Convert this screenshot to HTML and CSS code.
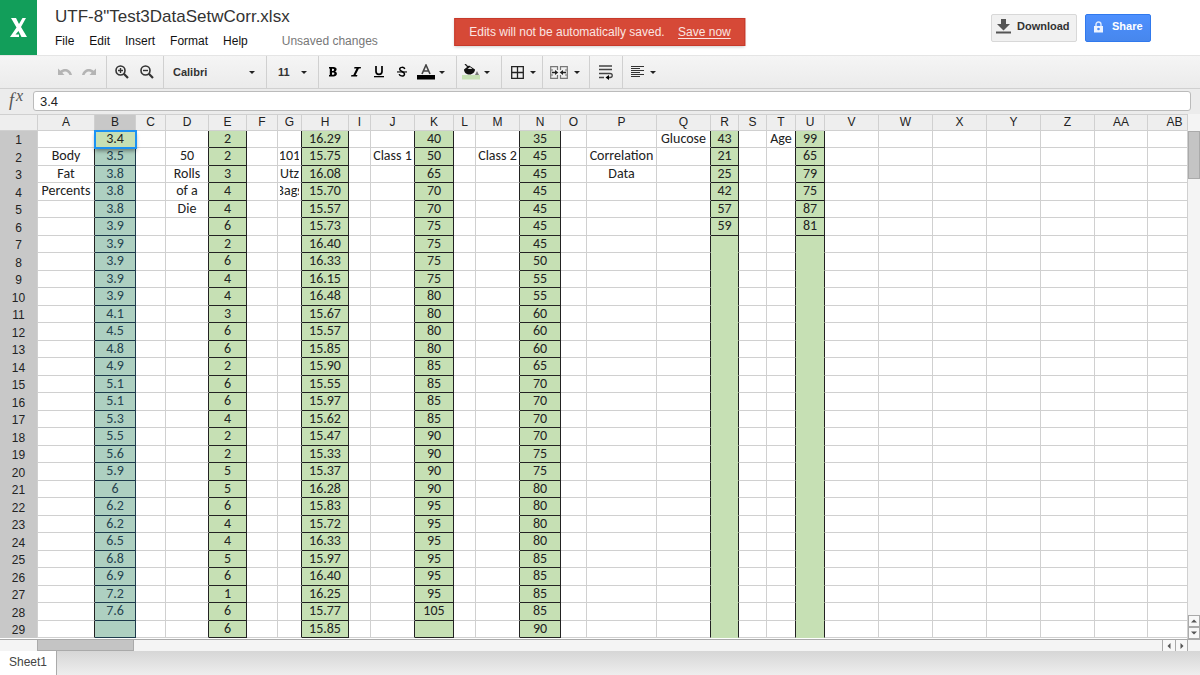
FILE: index.html
```html
<!DOCTYPE html>
<html lang="en">
<head>
<meta charset="utf-8">
<title>UTF-8"Test3DataSetwCorr.xlsx</title>
<link rel="stylesheet" href="styles.css">
</head>
<body>
<header class="header">
  <div class="logo" aria-hidden="true">
    <svg width="18" height="20" viewBox="0 0 18 20"><path d="M1 0H6L9 6L12.500 0H16L11 9L17 19H11.500L8.500 13L5.500 16.500H9V19H0L6.500 9.500Z" fill="#fff"/></svg>
  </div>
  <div class="document">
    <h1 class="title">UTF-8"Test3DataSetwCorr.xlsx</h1>
    <nav class="menu">
      <button class="menu-item">File</button>
      <button class="menu-item">Edit</button>
      <button class="menu-item">Insert</button>
      <button class="menu-item">Format</button>
      <button class="menu-item">Help</button>
      <span class="status">Unsaved changes</span>
    </nav>
  </div>
  <div class="banner" role="status">Edits will not be automatically saved. <a class="banner-link" href="#save">Save now</a></div>
  <div class="actions">
    <button class="action download">
      <svg width="15" height="15" viewBox="0 0 15 15" fill="#555"><path d="M5 0H10V5H14L7.500 11.500L1 5H5Z"/><path d="M0 12.500H15V14.500H0Z"/></svg>
      <span class="action-label">Download</span>
    </button>
    <button class="action share">
      <svg width="9" height="12" viewBox="0 0 9 12"><path d="M2 6V3.500A2.500 2.500 0 0 1 7 3.500V6" fill="none" stroke="#dce9ff" stroke-width="1.400"/><path d="M0 5H9V11.500H0Z" fill="#eef4ff"/><circle cx="4.500" cy="8" r="1.300" fill="#4a8bf5"/></svg>
      <span class="action-label">Share</span>
    </button>
  </div>
</header>

<div class="toolbar" role="toolbar" aria-label="Formatting">
  <div class="group history">
    <button class="tool" aria-label="Undo"><svg width="14" height="8" viewBox="0 0 14 8"><path d="M0 .5V7H6.500L4.300 4.800C7 2.500 10 3.500 11.500 7H14C12.500 1 6.500-.5 2.300 2.800Z" fill="#b4b4b4"/></svg></button>
    <button class="tool" aria-label="Redo"><svg width="14" height="8" viewBox="0 0 14 8"><path d="M14 .5V7H7.500L9.700 4.800C7 2.500 4 3.500 2.500 7H0C1.500 1 7.500-.5 11.700 2.800Z" fill="#b4b4b4"/></svg></button>
  </div>
  <div class="group zoom">
    <button class="tool" aria-label="Zoom in"><svg width="14" height="14" viewBox="0 0 14 14" fill="none" stroke="#333"><circle cx="5.500" cy="5.500" r="4.500" stroke-width="1.600"/><path d="M3 5.500H8M5.500 3V8" stroke-width="1.400"/><path d="M8.800 8.800L13 13" stroke-width="2.200"/></svg></button>
    <button class="tool" aria-label="Zoom out"><svg width="14" height="14" viewBox="0 0 14 14" fill="none" stroke="#333"><circle cx="5.500" cy="5.500" r="4.500" stroke-width="1.600"/><path d="M3 5.500H8" stroke-width="1.400"/><path d="M8.800 8.800L13 13" stroke-width="2.200"/></svg></button>
  </div>
  <div class="group family">
    <select class="picker" aria-label="Font"><option>Calibri</option></select>
    <span class="caret"></span>
  </div>
  <div class="group size">
    <select class="picker" aria-label="Font size"><option>11</option></select>
    <span class="caret"></span>
  </div>
  <div class="group style">
    <button class="tool" aria-label="Bold"><svg width="10" height="10" viewBox="0 0 10 10"><path fill-rule="evenodd" d="M1 0H5.500C9.500 0 9.300 4 7 4.500C10 5.200 9.500 9.500 5.500 9.500H1V8H1.800V1.500H1ZM4 1.800V4H5C6.500 4 6.500 1.800 5 1.800ZM4 5.500V7.800H5.200C6.800 7.800 6.800 5.500 5.200 5.500Z"/></svg></button>
    <button class="tool" aria-label="Italic"><svg width="10" height="10" viewBox="0 0 10 10"><path d="M3.500 0H10L9.600 1.400H7.900L4.600 8.100H6.400L6 9.500H0L.4 8.100H2.300L5.500 1.400H3.100Z"/></svg></button>
    <button class="tool" aria-label="Underline"><svg width="10" height="12" viewBox="0 0 10 12"><path d="M2 0V5.500C2 9.300 8 9.300 8 5.500V0" fill="none" stroke="#000" stroke-width="1.700"/><path d="M0 10H10V11.300H0Z"/></svg></button>
    <button class="tool" aria-label="Strikethrough"><svg width="10" height="12" viewBox="0 0 10 12"><path d="M7.800 3C7 .8 2.700.8 2.700 3.200C2.700 5.500 7.500 5.500 7.500 8C7.500 10.800 2.700 10.500 2.200 8.200" fill="none" stroke="#000" stroke-width="1.500"/><path d="M0 5.400H10V6.500H0Z"/></svg></button>
    <button class="tool dropdown" aria-label="Text colour"><svg width="18" height="16" viewBox="0 0 18 16"><path d="M5 10L9 1L13 10M6.300 7H11.700" fill="none" stroke="#444" stroke-width="1.600"/><path d="M0 11H18V15.500H0Z"/></svg><span class="caret"></span></button>
  </div>
  <div class="group fill">
    <button class="tool dropdown" aria-label="Fill colour"><svg width="18" height="16" viewBox="0 0 18 16"><path d="M0 11H18V15.500H0Z" fill="#c6e0b4"/><path d="M3 0L8 5" stroke="#222" stroke-width="1.300"/><path d="M2 5.500L7 1.500L13 5.500C13 8 10.500 10.500 7.500 10.500C4.500 10.500 2 8.500 2 5.500Z" fill="#111"/><path d="M5.500 5L8 3L10.500 5Z" fill="#ddd"/><path d="M15 7L17 11H13Z" fill="#777"/></svg><span class="caret"></span></button>
  </div>
  <div class="group borders">
    <button class="tool dropdown" aria-label="Borders"><svg width="13" height="13" viewBox="0 0 13 13"><path d="M.7.7H12.300V12.300H.7ZM6.500.7V12.300M.7 6.500H12.300" fill="none" stroke="#222" stroke-width="1.300"/></svg><span class="caret"></span></button>
  </div>
  <div class="group merge">
    <button class="tool dropdown" aria-label="Merge cells"><svg width="18" height="13" viewBox="0 0 18 13"><path d="M7.500 4V.7H.7V12.300H7.500V9M10.500 4V.7H17.300V12.300H10.500V9M.7 4H3M.7 9H3M15 4H17.300M15 9H17.300" fill="none" stroke="#777" stroke-width="1.200"/><path d="M2 5.800H5V4L8.300 6.500L5 9V7.200H2ZM16 5.800H13V4L9.700 6.500L13 9V7.200H16Z" fill="#222"/></svg><span class="caret"></span></button>
  </div>
  <div class="group wrap">
    <button class="tool" aria-label="Wrap text"><svg width="14" height="15" viewBox="0 0 14 15"><path d="M0 1H13M0 4.500H13M0 8.500H11C14 8.500 14 12.500 11 12.500H9M0 12.500H5" fill="none" stroke="#444" stroke-width="1.300"/><path d="M10 10V15L6.500 12.500Z"/></svg></button>
  </div>
  <div class="group align">
    <button class="tool dropdown" aria-label="Align"><svg width="13" height="12" viewBox="0 0 13 12"><path d="M0 .5H13M0 2.500H9M0 4.500H13M0 6.500H9M0 8.500H13M0 10.500H9" fill="none" stroke="#333"/></svg><span class="caret"></span></button>
  </div>
</div>

<div class="formula">
  <label class="formula-label" for="formula">f<sup class="formula-sup">x</sup></label>
  <input class="formula-input" id="formula" type="text" value="3.4">
</div>

<main class="workspace">
  <div class="sheet">
    <table class="cells">
      <colgroup id="columns"></colgroup>
      <thead><tr id="letters"></tr></thead>
      <tbody id="rows"></tbody>
    </table>
  </div>
  <div class="vertical-scroll">
    <div class="vertical-thumb"></div>
    <button class="step up" aria-label="Scroll up"><svg width="6" height="4" viewBox="0 0 6 4"><path d="M0 3.500L3 .5L6 3.500Z" fill="#555"/></svg></button>
    <button class="step" aria-label="Scroll down"><svg width="6" height="4" viewBox="0 0 6 4"><path d="M0 .5L3 3.500L6 .5Z" fill="#555"/></svg></button>
  </div>
</main>
<div class="horizontal-scroll">
  <div class="horizontal-thumb"></div>
  <button class="side-step left" aria-label="Scroll left"><svg width="4" height="6" viewBox="0 0 4 6"><path d="M3.500 0L.5 3L3.500 6Z" fill="#555"/></svg></button>
  <button class="side-step" aria-label="Scroll right"><svg width="4" height="6" viewBox="0 0 4 6"><path d="M.5 0L3.500 3L.5 6Z" fill="#555"/></svg></button>
</div>
<footer class="tabs"><button class="tab">Sheet1</button></footer>
<script src="sheet.js"></script>
</body>
</html>
```
FILE: styles.css
```css
* { box-sizing: border-box; }

body {
  display: flex;
  flex-direction: column;
  height: 100vh;
  margin: 0;
  overflow: hidden;
  background: #fff;
  color: #222;
  font: 12px/16px "Liberation Sans", Arial, sans-serif;
}

button, select, input { margin: 0; font: inherit; color: inherit; }
button { padding: 0; border: 0; background: none; }
svg { display: block; flex: none; }

/* Header */
.header { position: relative; display: flex; flex: none; height: 55px; }
.logo { display: flex; align-items: center; justify-content: center; width: 37px; background: #129e5a; }
.document { padding: 6px 0 0 18px; }
.title { margin: 0 0 6px; font-size: 17px; font-weight: 400; line-height: 21px; color: #333; white-space: nowrap; }
.menu { display: flex; gap: 15px; }
.menu-item { color: #111; }
.status { padding-left: 19px; color: #777; }

.banner {
  position: absolute;
  top: 18px;
  left: 50%;
  height: 28px;
  padding: 0 14px;
  border: 1px solid #c6392a;
  background: #d64937;
  box-shadow: 0 1px 3px #0003;
  color: #fbe5e2;
  line-height: 26px;
  white-space: nowrap;
  transform: translateX(-50%);
}
.banner-link { margin-left: 10px; color: inherit; text-underline-offset: 2px; }

.actions { display: flex; gap: 8px; margin: 14px 49px 0 auto; }
.action {
  display: flex;
  height: 28px;
  border: 1px solid #d8d8d8;
  border-radius: 2px;
  font-size: 11px;
  font-weight: 700;
}
.download { gap: 6px; width: 86px; padding: 4px 0 0 4px; background: #f1f1f1; color: #333; }
.share { gap: 9px; width: 66px; padding: 6px 0 0 8px; border-color: #3079ed; background: linear-gradient(#4d90fe, #4787ed); color: #fff; }
.download .action-label { line-height: 14px; }
.share .action-label { line-height: 10px; }

/* Toolbar */
.toolbar {
  display: flex;
  flex: none;
  height: 34px;
  border-top: 1px solid #e5e5e5;
  border-bottom: 1px solid #d0d0d0;
  background: linear-gradient(#f5f5f5, #ebebeb);
}
.group { display: flex; align-items: center; border-right: 1px solid #d0d0d0; }
.tool { display: flex; align-items: center; }
.caret { flex: none; border: 3px solid transparent; border-top-color: #222; border-bottom: 0; }
.history { gap: 10px; width: 107px; padding-left: 58px; }
.zoom { gap: 11px; width: 57px; padding-left: 8px; }
.family { width: 103px; padding: 0 11px 0 9px; }
.size { width: 52px; padding: 0 11px 0 11px; }
.picker { flex: 1; min-width: 0; padding: 0; border: 0; background: none; appearance: none; font-size: 11px; font-weight: 700; color: #333; }
.style { gap: 13px; width: 138px; padding-left: 9px; }
.fill { width: 45px; padding-left: 5px; }
.borders { width: 41px; padding-left: 9px; }
.merge { width: 47px; padding-left: 7px; }
.wrap { width: 33px; padding-left: 9px; }
.align { padding-left: 8px; border: 0; }
.dropdown { gap: 6px; }
.style .dropdown { margin-left: -3px; gap: 4px; }
.fill .dropdown { gap: 4px; }

/* Formula bar */
.formula { display: flex; flex: none; height: 25px; padding: 2px 9px 3px 9px; background: #ececec; }
.formula-label { width: 24px; font: italic 18px/18px "Liberation Serif", serif; color: #555; white-space: nowrap; }
.formula-sup { margin-left: 2px; font-size: 16px; line-height: 0; vertical-align: 5px; }
.formula-input { flex: 1; min-width: 0; height: 20px; padding: 0 6px; border: 1px solid #bbb; border-radius: 3px; background: #fff; font-size: 13px; }

/* Sheet */
.workspace { display: flex; flex: 1; min-height: 0; }
.sheet { flex: 1; min-width: 0; overflow: hidden; border-right: 1px solid #d0d0d0; }
.cells { width: 1202px; border-spacing: 0; table-layout: fixed; }
.cells tr { height: 18px; }
.cells tbody tr:nth-child(odd), .cells thead tr { height: 17px; }
.corner, .letter, .number, .cell { height: inherit; padding: 0; overflow: hidden; border: 0 solid #d0d0d0; font-weight: 400; text-align: center; white-space: nowrap; }
.corner, .letter { border-width: 1px 1px 1px 0; background: #eee; line-height: 15px; }
.number { padding-top: 2px; border-right-width: 1px; background: #c8c8c8; line-height: 15px; }
.letter.active { background: #c8c8c8; }
.cell { border-width: 0 1px 1px 0; font: 14px/15px Carlito, Lato, sans-serif; vertical-align: top; }
.value { display: flex; justify-content: center; height: 15px; margin: 0 2px; overflow: hidden; }
.cell.before-filled { border-right-color: #222; }
.cell.filled { border-color: #222; background: #c6e0b4; }
.cell.open { border-bottom-color: #c6e0b4; }
.cell.selected { background: #aed0c1; color: #24424f; }
.cell.selected.filled { border-color: #1e3b4c; }
.cell.current { position: relative; z-index: 1; outline: 2px solid #1c92f2; outline-offset: -1px; box-shadow: 0 3px 4px #0006; }

/* Scroll bars */
.vertical-scroll { display: flex; flex-direction: column; width: 12px; padding-top: 17px; background: #f4f4f4; }
.vertical-thumb { height: 48px; border: 1px solid #aaa; background: #c4c4c4; }
.step { display: flex; align-items: center; justify-content: center; height: 12px; border: 1px solid #aaa; background: #f8f8f8; }
.up { margin-top: auto; }
.horizontal-scroll { display: flex; flex: none; height: 12px; padding: 0 12px 0 37px; border-top: 1px solid #aaa; background: #f4f4f4; }
.horizontal-thumb { width: 97px; border: 1px solid #aaa; border-top: 0; background: #c4c4c4; }
.side-step { display: flex; align-items: center; justify-content: center; width: 13px; border: 1px solid #aaa; border-width: 0 1px; background: #f8f8f8; }
.left { margin-left: auto; border-right: 0; }

/* Sheet tabs */
.tabs { display: flex; flex: none; height: 24px; background: linear-gradient(#d6d6d6, #eee); }
.tab { padding: 0 9px 3px; border-right: 1px solid #aaa; background: #fff; color: #444; }
```
FILE: sheet.js
```js
const widths = {
  A: 57, B: 41, C: 30, D: 43, E: 38, F: 31, G: 24, H: 47, I: 22, J: 44,
  K: 39, L: 22, M: 44, N: 41, O: 26, P: 70, Q: 54, R: 28, S: 28, T: 29,
  U: 29, V: 54, W: 54, X: 54, Y: 54, Z: 54, AA: 53, AB: 54
};

// Values run down each column from row 1; "|" separates them.
const data = {
  A: "|Body|Fat|Percents",
  B: "3.4|3.5|3.8|3.8|3.8|3.9|3.9|3.9|3.9|3.9|4.1|4.5|4.8|4.9|5.1|5.1|5.3|5.5|5.6|5.9|6|6.2|6.2|6.5|6.8|6.9|7.2|7.6",
  D: "|50|Rolls|of a|Die",
  E: "2|2|3|4|4|6|2|6|4|4|3|6|6|2|6|6|4|2|2|5|5|6|4|4|5|6|1|6|6",
  G: "|101|Utz|Bags",
  H: "16.29|15.75|16.08|15.70|15.57|15.73|16.40|16.33|16.15|16.48|15.67|15.57|15.85|15.90|15.55|15.97|15.62|15.47|15.33|15.37|16.28|15.83|15.72|16.33|15.97|16.40|16.25|15.77|15.85",
  J: "|Class 1",
  K: "40|50|65|70|70|75|75|75|75|80|80|80|80|85|85|85|85|90|90|90|90|95|95|95|95|95|95|105",
  M: "|Class 2",
  N: "35|45|45|45|45|45|45|50|55|55|60|60|60|65|70|70|70|70|75|75|80|80|80|80|85|85|85|85|90",
  P: "|Correlation|Data",
  Q: "Glucose",
  R: "43|21|25|42|57|59",
  T: "Age",
  U: "99|65|79|75|87|81"
};
const filled = new Set(["B", "E", "H", "K", "N", "R", "U"]);
const names = Object.keys(widths);
const values = Object.fromEntries(names.map(n => [n, (data[n] || "").split("|")]));

function add(parent, tag, className, text) {
  const element = document.createElement(tag);
  element.className = className;
  element.textContent = text;
  parent.append(element);
  return element;
}

const columns = document.getElementById("columns");
[38, ...Object.values(widths)].forEach(width => {
  add(columns, "col", "", "").style.width = width + "px";
});

const letters = document.getElementById("letters");
add(letters, "td", "corner", "");
names.forEach(name => add(letters, "th", name === "B" ? "letter active" : "letter", name));

const body = document.getElementById("rows");
for (let row = 0; row < 29; row++) {
  const line = add(body, "tr", "", "");
  add(line, "th", "number", row + 1);
  names.forEach((name, index) => {
    const classes = ["cell"];
    if (filled.has(name)) classes.push("filled");
    if (filled.has(names[index + 1])) classes.push("before-filled");
    if (row > 5 && (name === "R" || name === "U")) classes.push("open");
    if (name === "B") classes.push(row === 0 ? "current" : "selected");
    const cell = add(line, "td", classes.join(" "), "");
    if (values[name][row]) add(cell, "div", "value", values[name][row]);
  });
}
```
